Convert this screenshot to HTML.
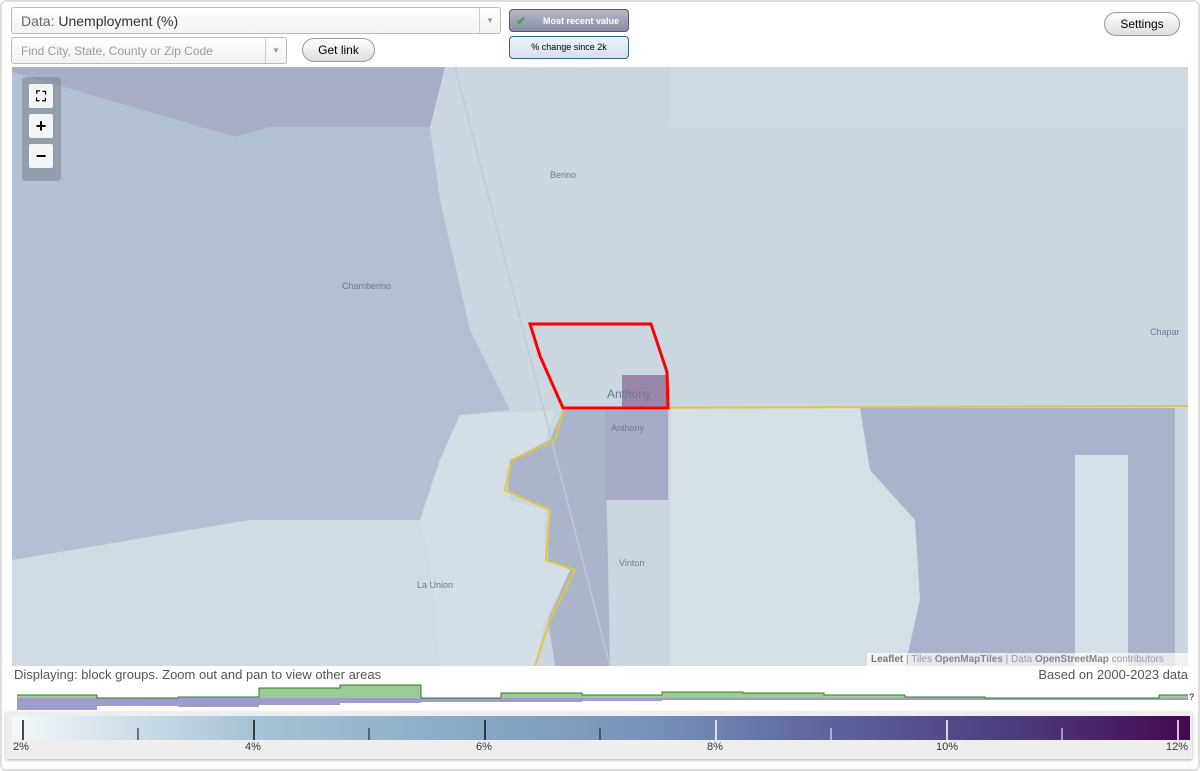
<!DOCTYPE html>
<html><head><style>
body{margin:0;width:1200px;height:771px;background:#fff;font-family:"Liberation Sans",sans-serif;position:relative;overflow:hidden}
.frame{position:absolute;left:0;top:0;width:1196px;height:767px;border:2px solid #ddd;border-radius:6px}
.sel{position:absolute;border:1px solid #bbb;border-radius:3px;background:linear-gradient(#fff,#f2f2f2);box-sizing:border-box}
.arr{position:absolute;right:0;top:0;bottom:0;width:20px;border-left:1px solid #ccc;color:#999;font-size:8px;text-align:center}
.btn{position:absolute;border:1px solid #999;border-radius:12px;background:linear-gradient(#fff,#ddd);font-size:12px;text-align:center;box-sizing:border-box}
.zb{position:absolute;left:29px;width:24px;height:24px;background:#f4f4f4;border-radius:2px;text-align:center;font-weight:bold;font-size:18px;line-height:24px}
</style></head><body>
<div class="frame"></div>
<div class="sel" style="left:11px;top:7px;width:490px;height:27px"><span style="position:absolute;left:9px;top:5px;font-size:14px;color:#333"><span style="color:#666">Data:</span> Unemployment (%)</span><div class="arr" style="line-height:26px">▼</div></div>
<div class="sel" style="left:11px;top:37px;width:276px;height:27px"><span style="position:absolute;left:9px;top:6px;font-size:12px;color:#999">Find City, State, County or Zip Code</span><div class="arr" style="line-height:26px">▼</div></div>
<div class="btn" style="left:302px;top:38px;width:73px;height:24px;line-height:22px">Get link</div>
<div style="position:absolute;left:509px;top:9px;width:120px;height:23px;border:1px solid #557;border-radius:4px;background:linear-gradient(#b5b8c8,#8a8ea6);color:#fff;font-size:9px;font-weight:bold;line-height:22px;box-sizing:border-box;text-align:right;padding-right:9px"><span style="position:absolute;left:6px;color:#4a4;font-size:12px">✔</span>Most recent value</div>
<div style="position:absolute;left:509px;top:36px;width:120px;height:23px;border:1px solid #368;border-radius:4px;background:linear-gradient(#eef3fa,#d5e0ee);font-size:9px;line-height:21px;text-align:center;box-sizing:border-box">% change since 2k</div>
<div class="btn" style="left:1104px;top:12px;width:76px;height:24px;line-height:22px">Settings</div>
<svg style="position:absolute;left:12px;top:67px" width="1176" height="599" viewBox="12 67 1176 599">
<rect x="12" y="67" width="1176" height="599" fill="#cad7e0"/>
<rect x="670" y="67" width="518" height="60" fill="#cedbe3"/>
<polygon points="12,67 445,67 430,127 270,127 235,137 12,72" fill="#a9aec8"/>
<polygon points="12,72 235,137 270,127 430,127 440,200 470,330 510,410 460,415 440,460 420,520 250,520 12,560" fill="#b1c0d2"/>
<polygon points="12,560 250,520 420,520 430,560 440,666 12,666" fill="#d0dbe3"/>
<polygon points="460,415 555,410 545,440 505,470 510,500 545,510 545,560 570,570 545,620 535,666 440,666 430,560 420,520 440,460" fill="#d3dee6"/>
<polygon points="670,408 860,408 870,470 915,520 920,600 905,666 670,666" fill="#d4dfe6"/>
<polygon points="860,408 1175,408 1175,666 905,666 920,600 915,520 870,470" fill="#a9b3cb"/>
<rect x="1075" y="455" width="53" height="211" fill="#d4dfe7"/>
<polygon points="563,410 605,410 610,666 555,666 548,620 570,570 548,560 550,510 508,490 510,460 550,440" fill="#aab4cb"/>
<rect x="605" y="410" width="63" height="90" fill="#a8abc8"/>
<rect x="622" y="375" width="46" height="33" fill="#9a86a8"/>
<line x1="455" y1="67" x2="610" y2="666" stroke="#b8cadb" stroke-width="1.5"/>
<polyline points="563,408 1188,406" fill="none" stroke="#e0c640" stroke-width="2"/>
<polyline points="563,410 555,440 512,460 505,490 550,510 546,560 575,570 550,620 535,666" fill="none" stroke="#e0c640" stroke-width="2"/>
<polygon points="530,324 651,324 667,372 668,408 563,408 540,356" fill="none" stroke="#f00" stroke-width="3"/>
<g font-size="9" fill="#6b7a8c"><text x="550" y="178">Berino</text><text x="342" y="289">Chamberino</text><text x="611" y="431">Anthony</text><text x="619" y="566">Vinton</text><text x="417" y="588">La Union</text><text x="1150" y="335">Chapar</text></g>
<text x="607" y="398" font-size="12" fill="#6b7a8c">Anthony</text>
</svg>
<div style="position:absolute;left:22px;top:77px;width:39px;height:104px;background:rgba(120,130,140,.55);border-radius:4px"></div>
<div class="zb" style="top:84px;font-size:14px">⛶</div>
<div class="zb" style="top:114px">+</div>
<div class="zb" style="top:144px">−</div>
<div style="position:absolute;left:867px;top:653px;width:321px;height:13px;background:rgba(255,255,255,.7);font-size:10px;color:#999;line-height:13px;padding-left:4px"><b style="color:#777">Leaflet</b> | Tiles <b style="color:#888">OpenMapTiles</b> | Data <b style="color:#888">OpenStreetMap</b> contributors</div>
<div style="position:absolute;left:14px;top:667px;font-size:13px;color:#555">Displaying: block groups. Zoom out and pan to view other areas</div>
<div style="position:absolute;right:12px;top:667px;font-size:13px;color:#555">Based on 2000-2023 data</div>
<svg style="position:absolute;left:0;top:0" width="1200" height="771">
<polygon points="17,698 17,710 97,710 97,706 178,706 178,707 259,707 259,705 340,705 340,703 421,703 421,702 582,702 582,701 662,701 662,700 1188,700 1188,698" fill="#9e9ccc"/>
<polygon points="17,698 17,695 97,695 97,698 178,698 178,697 259,697 259,688 340,688 340,685 421,685 421,698 501,698 501,693 582,693 582,695 662,695 662,692 743,692 743,693 824,693 824,695 905,695 905,697 985,697 985,698 1159,698 1159,695 1188,695 1188,698" fill="#9dcb97"/>
<polyline points="17,695 97,695 97,698 178,698 178,697 259,697 259,688 340,688 340,685 421,685 421,698 501,698 501,693 582,693 582,695 662,695 662,692 743,692 743,693 824,693 824,695 905,695 905,697 985,697 985,698 1159,698 1159,695 1188,695" fill="none" stroke="#2e7d22" stroke-width="1"/>
<text x="1189" y="700" font-size="9">?</text>
</svg>
<div style="position:absolute;left:6px;top:712px;width:1186px;height:47px;background:#eee;box-shadow:0 1px 3px #aaa"></div>
<div style="position:absolute;left:12px;top:716px;width:1178px;height:24px;background:linear-gradient(90deg,#f4f8f9,#a8c3d6 20%,#8eafc8 35%,#7690b8 55%,#5d619a 70%,#4c3d7c 85%,#45084f)"></div>
<svg style="position:absolute;left:12px;top:716px" width="1178" height="24">
<g stroke="#111" stroke-width="1.5"><line x1="11" y1="4" x2="11" y2="24"/><line x1="242" y1="4" x2="242" y2="24"/><line x1="473" y1="4" x2="473" y2="24"/></g>
<g stroke="#111"><line x1="126" y1="12" x2="126" y2="24"/><line x1="357" y1="12" x2="357" y2="24"/><line x1="588" y1="12" x2="588" y2="24"/></g>
<g stroke="#fff" stroke-width="1.5"><line x1="704" y1="4" x2="704" y2="24"/><line x1="935" y1="4" x2="935" y2="24"/><line x1="1166" y1="4" x2="1166" y2="24"/></g>
<g stroke="#fff"><line x1="819" y1="12" x2="819" y2="24"/><line x1="1050" y1="12" x2="1050" y2="24"/></g>
</svg>
<div style="position:absolute;top:741px;font-size:11px;color:#333;left:13px">2%</div>
<div style="position:absolute;top:741px;font-size:11px;color:#333;left:245px">4%</div>
<div style="position:absolute;top:741px;font-size:11px;color:#333;left:476px">6%</div>
<div style="position:absolute;top:741px;font-size:11px;color:#333;left:707px">8%</div>
<div style="position:absolute;top:741px;font-size:11px;color:#333;left:936px">10%</div>
<div style="position:absolute;top:741px;font-size:11px;color:#333;left:1166px">12%</div>
</body></html>
